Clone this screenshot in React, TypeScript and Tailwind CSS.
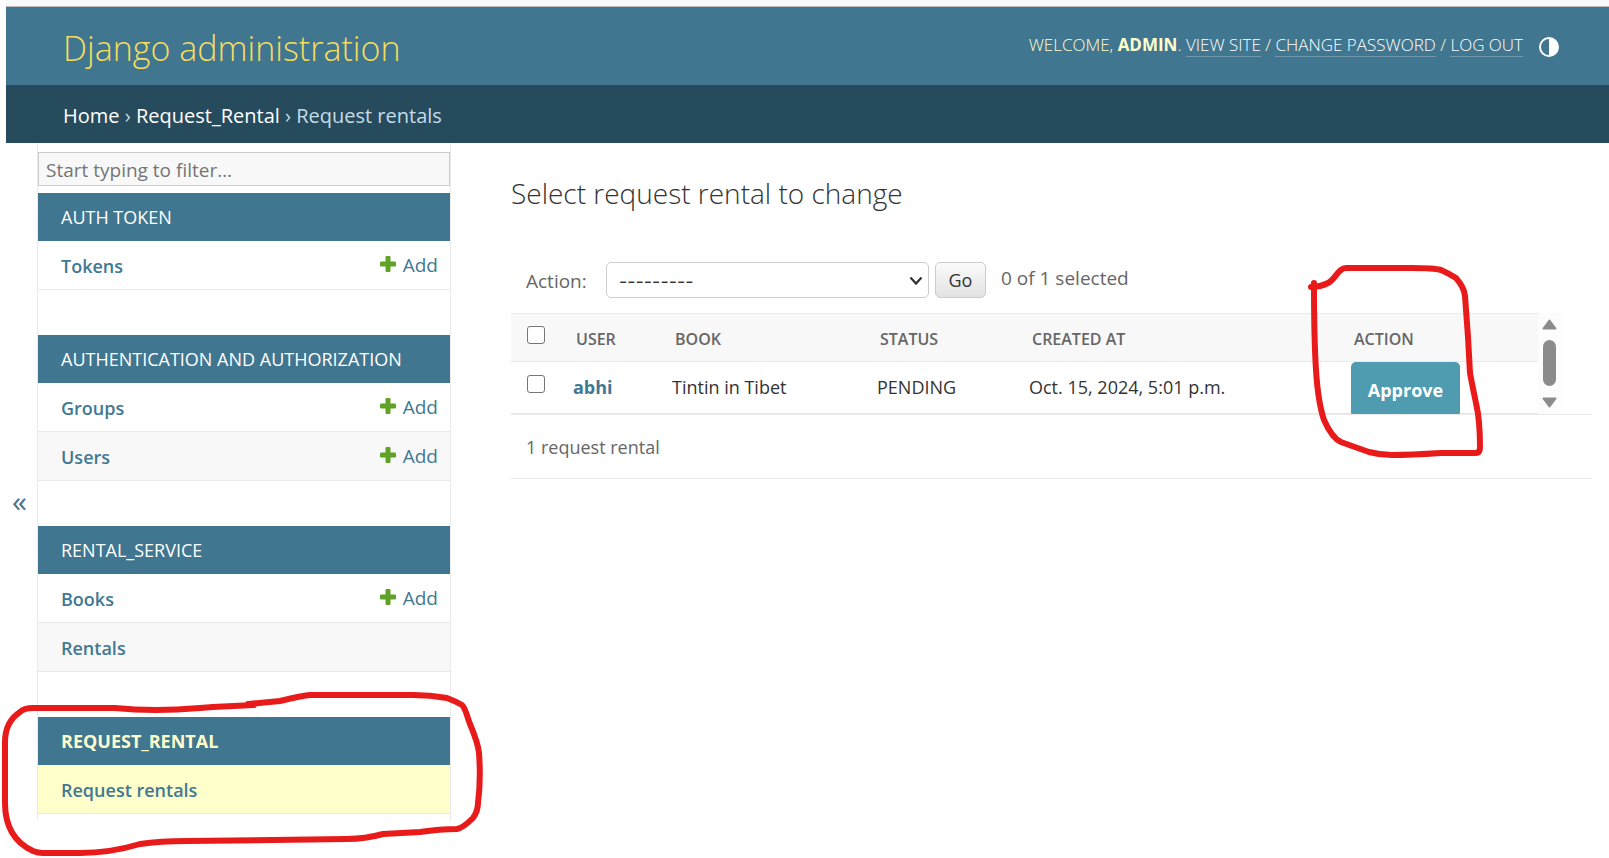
import React from "react";

type Model = { name: string; add?: boolean; current?: boolean };
type AppGroup = { label: string; models: Model[]; current?: boolean };

const groups: AppGroup[] = [
  { label: "AUTH TOKEN", models: [{ name: "Tokens", add: true }] },
  {
    label: "AUTHENTICATION AND AUTHORIZATION",
    models: [
      { name: "Groups", add: true },
      { name: "Users", add: true },
    ],
  },
  { label: "RENTAL_SERVICE", models: [{ name: "Books", add: true }, { name: "Rentals" }] },
  { label: "REQUEST_RENTAL", current: true, models: [{ name: "Request rentals", current: true }] },
];

function PlusIcon() {
  return (
    <svg viewBox="0 0 16 16" className="mb-1 h-4 w-4" aria-hidden="true">
      <rect x="5.5" y="0" width="5" height="16" rx="1.2" fill="#5fa225" />
      <rect x="0" y="5.5" width="16" height="5" rx="1.2" fill="#5fa225" />
    </svg>
  );
}

function Header() {
  const link = "border-b border-white/25 text-white";
  return (
    <header className="flex h-[78px] items-center justify-between bg-[#417690] pt-1 pr-[50px] pl-[57px]">
      <h1 className="text-[34px] leading-10 font-light text-[#f5dd5d]">
        <a href="#">Django administration</a>
      </h1>
      <div className="flex items-center gap-4 pb-[2px] text-[17px] leading-5 font-light text-[#ffffcc]">
        <p className="pb-1">
          WELCOME, <strong className="font-bold">ADMIN</strong>.{" "}
          <a href="#" className={link}>VIEW SITE</a> /{" "}
          <a href="#" className={link}>CHANGE PASSWORD</a> /{" "}
          <a href="#" className={link}>LOG OUT</a>
        </p>
        <button type="button" aria-label="Toggle theme">
          <svg viewBox="0 0 20 20" className="h-5 w-5" aria-hidden="true">
            <circle cx="10" cy="10" r="9" fill="none" stroke="#fff" strokeWidth="2" />
            <path d="M10 1a9 9 0 0 1 0 18z" fill="#fff" />
          </svg>
        </button>
      </div>
    </header>
  );
}

function Sidebar() {
  return (
    <nav className="w-[414px] shrink-0 self-start border-x border-[#eaeaea] pt-[9px] pb-[6px]">
      <input
        type="search"
        aria-label="Filter navigation items"
        placeholder="Start typing to filter…"
        className="mb-[7px] block h-[34px] w-full border border-[#cccccc] bg-[#f8f8f8] px-[7px] pt-[2px] text-[19px] placeholder-[#757575] outline-none"
      />
      <div className="flex flex-col gap-[45px]">
        {groups.map((g) => (
          <section key={g.label} className="relative">
            <h2
              className={
                g.current
                  ? "flex h-12 items-center bg-[#417690] px-[23px] text-lg font-bold text-[#ffffcc]"
                  : "flex h-12 items-center bg-[#417690] px-[23px] text-lg text-white"
              }
            >
              <a href="#">{g.label}</a>
            </h2>
            <ul>
              {g.models.map((m, i) => (
                <li
                  key={m.name}
                  className={
                    "flex h-[49px] items-center justify-between border-b border-[#eaeaea] pt-[2px] pr-3 pl-[23px] text-lg text-[#417893] " +
                    (m.current ? "bg-[#ffffcc]" : i % 2 ? "bg-[#f8f8f8]" : "bg-white")
                  }
                >
                  <a href="#" className="font-semibold">{m.name}</a>
                  {m.add && (
                    <a href="#" className="flex items-center gap-[7px] text-[19px]">
                      <PlusIcon />
                      Add
                    </a>
                  )}
                </li>
              ))}
            </ul>
            {g.current && (
              <svg
                viewBox="0 685 486 173"
                className="pointer-events-none absolute -top-8 -left-[38px] h-[173px] w-[486px] max-w-none"
                aria-hidden="true"
              >
                <path
                  d="M254 705L213 707L200 708Q153 712 115 708L77 708L33 708Q24 708 20 712Q5 722 5 742L5 803Q5 838 33 851Q38 853 43 853L80 853Q110 853 140 844Q160 841 187 841L347 839Q365 839 383 834L420 832Q440 829 457 829Q463 828 473 818Q478 811 478 803Q481 780 479 753Q478 743 470 724C466 714 466 709 462 705Q455 701 447 698Q430 695 413 695L310 695Q300 696 280 701L248 704"
                  fill="none"
                  stroke="#e81a1a"
                  strokeWidth="6"
                  strokeLinecap="round"
                  strokeLinejoin="round"
                />
              </svg>
            )}
          </section>
        ))}
      </div>
    </nav>
  );
}

function Scrollbar() {
  return (
    <div className="flex w-[23px] shrink-0 flex-col items-center justify-between bg-[#fcfcfc] py-[6px]" aria-hidden="true">
      <svg viewBox="0 0 15 11" className="h-[11px] w-[15px]">
        <path d="M7.5 1.5L13.5 9.5H1.5z" fill="#8b8b8b" stroke="#8b8b8b" strokeWidth="2" strokeLinejoin="round" />
      </svg>
      <div className="mb-[2px] h-[46px] w-[13px] rounded-full bg-[#8b8b8b]" />
      <svg viewBox="0 0 15 11" className="h-[11px] w-[15px]">
        <path d="M7.5 9.5L13.5 1.5H1.5z" fill="#8b8b8b" stroke="#8b8b8b" strokeWidth="2" strokeLinejoin="round" />
      </svg>
    </div>
  );
}

const checkbox =
  "block h-[18px] w-[18px] appearance-none rounded-[3px] border border-[#767676] bg-white";

function Results() {
  return (
    <div className="relative">
      <div className="mr-[30px] flex h-[101px] overflow-hidden">
        <table className="w-full table-fixed border-collapse text-left">
          <colgroup>
            <col className="w-[50px]" />
            <col className="w-[99px]" />
            <col className="w-[205px]" />
            <col className="w-[152px]" />
            <col className="w-[322px]" />
            <col />
          </colgroup>
          <thead>
            <tr className="h-12 border-y border-[#eaeaea] bg-[#f8f8f8] text-base text-[#666666]">
              <th className="pb-[6px] pl-4">
                <input type="checkbox" aria-label="Select all" className={checkbox} />
              </th>
              <th className="px-[15px] pt-[2px] font-semibold">USER</th>
              <th className="px-[15px] pt-[2px] font-semibold">BOOK</th>
              <th className="px-[15px] pt-[2px] font-semibold">STATUS</th>
              <th className="px-[15px] pt-[2px] font-semibold">CREATED AT</th>
              <th className="px-[15px] pt-[2px] font-semibold">ACTION</th>
            </tr>
          </thead>
          <tbody>
            <tr className="h-[52px] border-b border-[#e6e6e6] text-lg text-[#333333]">
              <td className="pb-2 pl-4">
                <input type="checkbox" aria-label="Select abhi" className={checkbox} />
              </td>
              <th className="px-3 pb-[2px] font-bold text-[#417893]"><a href="#">abhi</a></th>
              <td className="px-3 pb-[2px]">Tintin in Tibet</td>
              <td className="px-3 pb-[2px]">PENDING</td>
              <td className="px-3 pb-[2px]">Oct. 15, 2024, 5:01 p.m.</td>
              <td className="px-3 align-top">
                <div className="h-[51px]">
                  <button type="button" className="h-[55px] w-[109px] rounded-[5px] bg-[#4f9bb0] text-lg font-bold text-white">
                    Approve
                  </button>
                </div>
              </td>
            </tr>
          </tbody>
        </table>
        <Scrollbar />
      </div>
      <p className="h-[65px] border-y border-[#eaeaea] px-[15px] pt-5 text-lg leading-6 text-[#666666]">
        1 request rental
      </p>
      <svg
        viewBox="1306 262 182 200"
        className="pointer-events-none absolute -top-[51px] right-[103px] h-[200px] w-[182px]"
        aria-hidden="true"
      >
        <path
          d="M1311 287Q1320 287 1328 283C1336 279 1338 268 1346 268L1411 268Q1434 268 1441 270Q1448 273 1456 278Q1464 287 1465 296L1468 337L1470 373Q1472 384 1476 403Q1480 420 1480 447Q1480 453 1476 453L1441 453Q1410 455 1392 455Q1380 455 1369 452L1352 446L1341 442Q1332 438 1324 420Q1318 402 1316 370Q1314 340 1314 283"
          fill="none"
          stroke="#e81a1a"
          strokeWidth="6"
          strokeLinecap="round"
          strokeLinejoin="round"
        />
      </svg>
    </div>
  );
}

function Main() {
  return (
    <main className="min-w-0 flex-1 pt-[30px] pr-[18px] pl-[60px]">
      <h2 className="mb-[49px] text-[28px] leading-10 font-light text-[#333333]">
        Select request rental to change
      </h2>
      <form className="mb-[15px] flex items-center pl-[15px] text-[19px] text-[#666666]" onSubmit={(e) => e.preventDefault()}>
        <label htmlFor="action" className="w-20 pt-[2px]">Action:</label>
        <div className="relative mr-[6px]">
          <select
            id="action"
            className="block h-9 w-[323px] appearance-none rounded-[5px] border border-[#cccccc] bg-white px-3 pt-1 font-['Inter',sans-serif] text-lg leading-6 text-[#333333]"
          >
            <option>---------</option>
          </select>
          <svg viewBox="0 0 14 10" className="pointer-events-none absolute top-[14px] right-[6px] h-[10px] w-[14px]" aria-hidden="true">
            <path d="M1.5 1.5L7 7.5L12.5 1.5" fill="none" stroke="#333" strokeWidth="2.2" />
          </svg>
        </div>
        <button
          type="submit"
          className="h-9 w-[51px] rounded-[5px] border border-[#cccccc] bg-linear-to-b from-[#fbfbfb] to-[#e2e2e2] text-lg text-[#333333]"
        >
          Go
        </button>
        <span className="ml-[15px] pb-1">0 of 1 selected</span>
      </form>
      <Results />
    </main>
  );
}

export default function App() {
  return (
    <div className="flex min-h-screen flex-col bg-white pl-[6px] font-['Open_Sans','Noto_Sans',sans-serif]">
      <div className="h-[7px] border-b border-[#bbbbbb] bg-[#f8f8f8]" />
      <Header />
      <div className="flex h-[58px] items-center bg-[#264b5d] px-[57px] pt-1 text-xl text-[#c4dce8]">
        <p>
          <a href="#" className="text-white">Home</a> ›{" "}
          <a href="#" className="text-white">Request_Rental</a> › Request rentals
        </p>
      </div>
      <div className="flex flex-1">
        <button type="button" aria-label="Toggle navigation" className="w-[31px] shrink-0 pr-1 text-3xl text-[#417893]">
          «
        </button>
        <Sidebar />
        <Main />
      </div>
    </div>
  );
}
